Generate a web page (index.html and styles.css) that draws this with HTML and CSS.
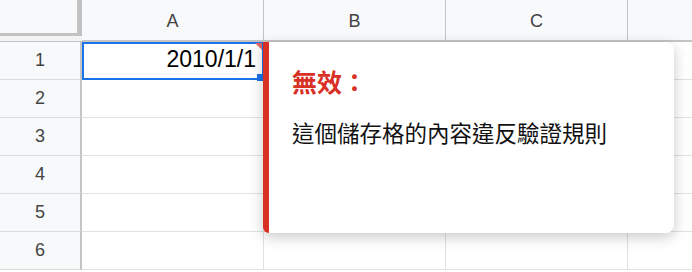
FILE: index.html
```html
<!DOCTYPE html>
<html lang="zh-Hant">
<head>
    <meta charset="UTF-8">
    <meta name="viewport" content="width=device-width, initial-scale=1.0">
    <title>試算表</title>
    <link rel="stylesheet" href="styles.css">
</head>
<body>
    <div class="sheet">
        <div class="grid">
            <div class="corner"><span class="corner-box"></span></div>
            <div class="col-head">A</div>
            <div class="col-head">B</div>
            <div class="col-head">C</div>
            <div class="col-head last"></div>

            <div class="row-head">1</div>
            <div class="cell selected">
                2010/1/1
                <span class="error-mark"></span>
                <span class="fill-handle"></span>
            </div>
            <div class="cell"></div>
            <div class="cell"></div>
            <div class="cell last"></div>

            <div class="row-head">2</div>
            <div class="cell"></div>
            <div class="cell"></div>
            <div class="cell"></div>
            <div class="cell last"></div>

            <div class="row-head">3</div>
            <div class="cell"></div>
            <div class="cell"></div>
            <div class="cell"></div>
            <div class="cell last"></div>

            <div class="row-head">4</div>
            <div class="cell"></div>
            <div class="cell"></div>
            <div class="cell"></div>
            <div class="cell last"></div>

            <div class="row-head">5</div>
            <div class="cell"></div>
            <div class="cell"></div>
            <div class="cell"></div>
            <div class="cell last"></div>

            <div class="row-head">6</div>
            <div class="cell"></div>
            <div class="cell"></div>
            <div class="cell"></div>
            <div class="cell last"></div>
        </div>

        <!-- Popup di errore di convalida -->
        <div class="invalid-popup">
            <div class="popup-title">無效：</div>
            <div class="popup-text">這個儲存格的內容違反驗證規則</div>
        </div>
    </div>
</body>
</html>
```

FILE: styles.css
```css
body {
    margin: 0;
    padding: 0;
    width: 692px;
    height: 272px;
    overflow: hidden;
    background-color: #fff;
    font-family: "Liberation Sans", Arial, sans-serif;
}

.sheet {
    position: relative;
    width: 692px;
    height: 272px;
    overflow: hidden;
}

.grid {
    display: grid;
    grid-template-columns: 82px 182px 182px 182px 120px;
    grid-template-rows: 42px repeat(6, 38px);
}

.corner {
    background-color: #f1f3f4;
    border-bottom: 1px solid #c4c4c4;
    box-sizing: border-box;
}

.corner-box {
    display: block;
    width: 77px;
    height: 33px;
    background-color: #f8f9fa;
    border-right: 5px solid #c2c2c2;
    border-bottom: 3px solid #c2c2c2;
}

.col-head {
    display: flex;
    align-items: center;
    justify-content: center;
    background-color: #f8f9fa;
    border-right: 1px solid #c4c4c4;
    border-bottom: 2px solid #c4c4c4;
    box-sizing: border-box;
    color: #444;
    font-size: 18px;
    padding-top: 2px;
}

.col-head.last {
    border-right: none;
}

.row-head {
    display: flex;
    align-items: center;
    justify-content: center;
    background-color: #f8f9fa;
    border-right: 2px solid #c4c4c4;
    border-bottom: 1px solid #dadcdc;
    box-sizing: border-box;
    color: #444;
    font-size: 18px;
}

.cell {
    position: relative;
    border-right: 1px solid #e1e1e1;
    border-bottom: 1px solid #e1e1e1;
    box-sizing: border-box;
}

.cell.last {
    border-right: none;
}

.cell.selected {
    display: flex;
    align-items: flex-end;
    justify-content: flex-end;
    padding: 0 6px 4px 0;
    font-size: 23px;
    line-height: 30px;
    color: #000;
    border: 2px solid #1a73e8;
}

.error-mark {
    position: absolute;
    top: -1px;
    right: 0;
    width: 0;
    height: 0;
    border-top: 7px solid #e06666;
    border-left: 7px solid transparent;
}

.fill-handle {
    position: absolute;
    right: -1px;
    bottom: -3px;
    width: 6px;
    height: 7px;
    background-color: #1a73e8;
}

.invalid-popup {
    position: absolute;
    top: 42px;
    left: 263px;
    width: 411px;
    height: 191px;
    box-sizing: border-box;
    background-color: #fff;
    border-left: 6px solid #d93025;
    border-radius: 0 8px 8px 6px;
    box-shadow: 0 4px 14px rgba(0, 0, 0, 0.22);
    padding: 24px 20px 0 23px;
    font-family: "Noto Sans CJK TC", "Noto Sans", sans-serif;
}

.popup-title {
    color: #d93025;
    font-size: 25px;
    font-weight: bold;
    line-height: 30px;
}

.popup-text {
    margin-top: 22px;
    color: #111;
    font-size: 22.5px;
    line-height: 28px;
}
```
